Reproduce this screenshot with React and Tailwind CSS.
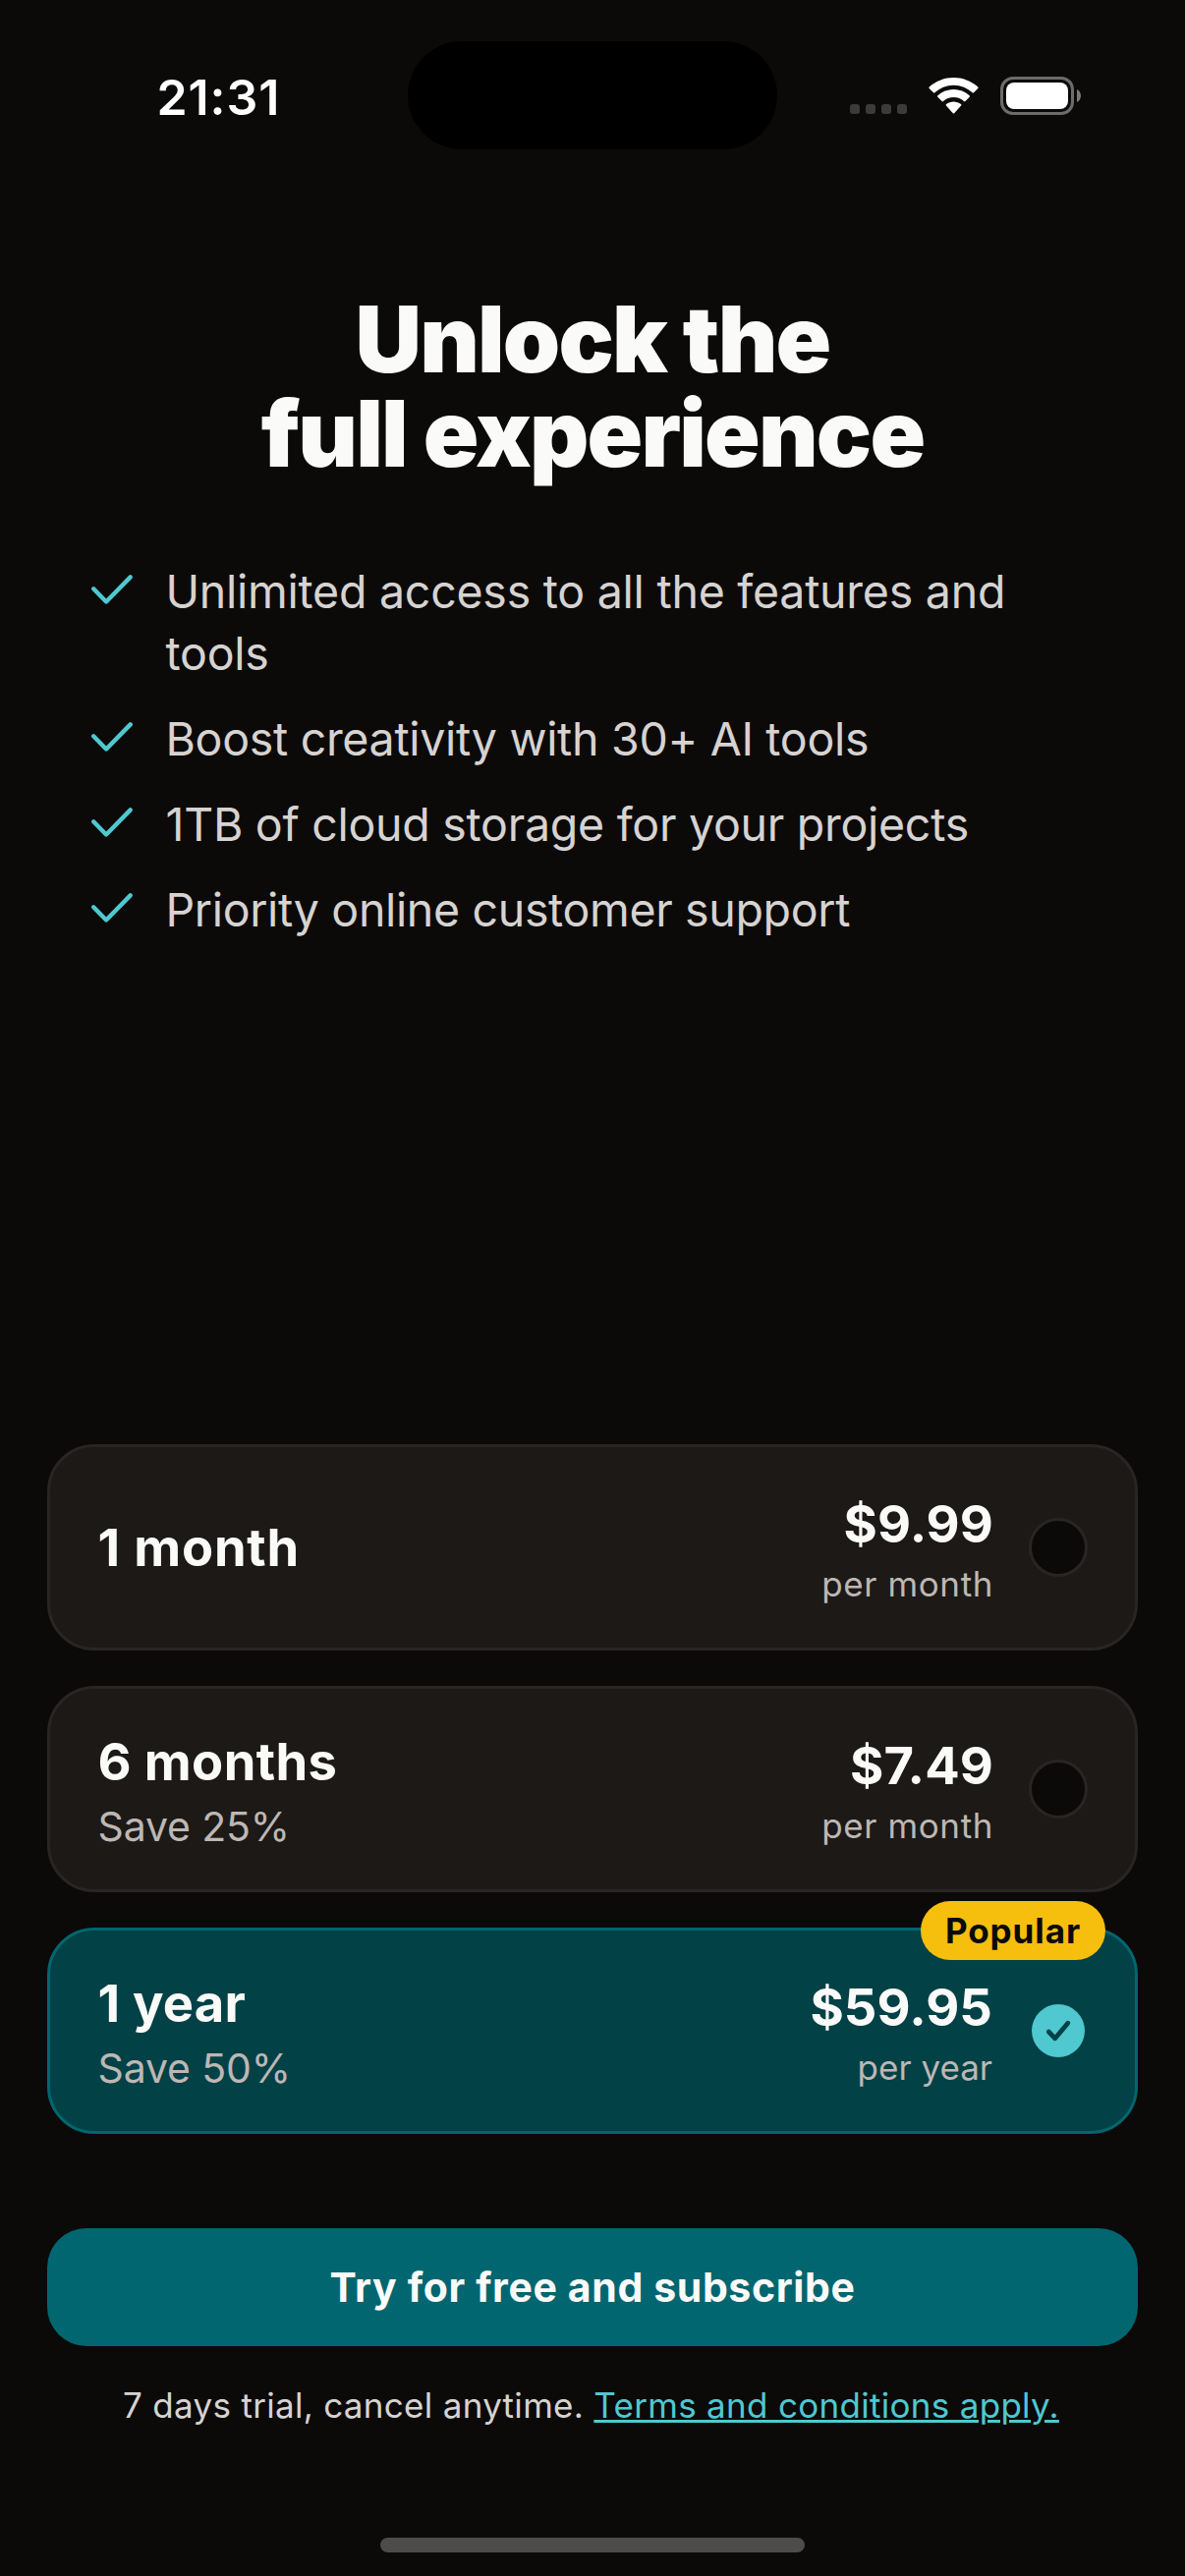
import React from "react";
import clsx from "clsx";

const features = [
  { text: "Unlimited access to all the features and tools", tracking: "tracking-[-0.25px]" },
  { text: "Boost creativity with 30+ AI tools", tracking: "tracking-[-0.31px]" },
  { text: "1TB of cloud storage for your projects", tracking: "tracking-[-0.27px]" },
  { text: "Priority online customer support", tracking: "tracking-[-0.34px]" },
];

const plans = [
  { name: "1 month", tracking: "tracking-[0.8px]", price: "$9.99", period: "per month" },
  { name: "6 months", tracking: "tracking-[0.38px]", save: "Save 25%", price: "$7.49", period: "per month" },
  { name: "1 year", tracking: "tracking-[0.2px]", save: "Save 50%", price: "$59.95", period: "per year", badge: "Popular", selected: true },
];

function WifiIcon() {
  return (
    <svg width="51" height="37" viewBox="0 0 51 37" fill="#fff">
      <path d="M25.5 7.7C32.9 7.7 39.6 10.6 44.6 15.3C45 15.7 45.6 15.7 46 15.3L50.3 11C50.7 10.6 50.7 10 50.3 9.6C36.4 -3.2 14.6 -3.2 0.7 9.6C0.3 10 0.3 10.6 0.7 11L5 15.3C5.4 15.7 6 15.7 6.4 15.3C11.4 10.6 18.1 7.7 25.5 7.7Z" />
      <path d="M25.5 20C29.5 20 33.2 21.5 36 24.1C36.4 24.5 37 24.5 37.4 24.1L41.7 19.8C42.1 19.4 42.1 18.7 41.7 18.3C32.6 9.9 18.4 9.9 9.3 18.3C8.9 18.7 8.9 19.4 9.3 19.8L13.6 24.1C14 24.5 14.6 24.5 15 24.1C17.8 21.5 21.5 20 25.5 20Z" />
      <path d="M33.1 28.5C33.5 28.1 33.5 27.5 33 27.1C28.7 23.5 22.3 23.5 18 27.1C17.5 27.5 17.5 28.1 17.9 28.5L24.8 36.2C25.2 36.6 25.8 36.6 26.2 36.2Z" />
    </svg>
  );
}

function StatusBar() {
  return (
    <header className="mt-[42px] flex h-[110px] shrink-0 items-center">
      <div className="w-[415px] pt-1 pl-[159.5px] text-[50px] leading-none font-semibold tracking-[0.9px] text-white">21:31</div>
      <div className="h-full w-[376px] rounded-full bg-black" />
      <div className="flex h-[39px] items-end pl-[74px]">
        <div className="mb-px flex gap-1.5">
          {[0, 1, 2, 3].map((dot) => (
            <span key={dot} className="size-2.5 rounded-[3px] bg-[#3c3b3a]" />
          ))}
        </div>
        <div className="mb-px ml-[22px]">
          <WifiIcon />
        </div>
        <div className="ml-[22px] h-[39px] w-[75px] rounded-[13px] border-3 border-[#6d6c6b] p-[3px]">
          <div className="h-full rounded-[8px] bg-white" />
        </div>
        <svg className="mb-[13px] ml-[3px]" width="4" height="13" viewBox="0 0 4 13" fill="#7b7a79">
          <path d="M0 0C2.4 1 4 3.6 4 6.5S2.4 12 0 13Z" />
        </svg>
      </div>
    </header>
  );
}

function FeatureItem({ text, tracking }) {
  return (
    <li className="flex items-start">
      <svg
        className="w-[48px] shrink-0"
        height="63"
        viewBox="0 0 48 63"
        fill="none"
        stroke="#4fc8d0"
        strokeWidth="4.4"
        strokeLinecap="round"
        strokeLinejoin="round"
      >
        <path d="M5.2 28.3L18.1 41.5L42.7 16.4" />
      </svg>
      <span className={clsx("pl-[30.5px] text-[46.5px] leading-[63px] text-[#d6d3d1]", tracking)}>{text}</span>
    </li>
  );
}

function PlanCard({ name, tracking, save, price, period, badge, selected }) {
  return (
    <div
      className={clsx(
        "relative flex h-[210px] items-center rounded-[48px] border-3 px-12",
        selected ? "border-[#02666f] bg-[#024146]" : "border-[#292524] bg-[#1c1917]"
      )}
    >
      <div className="flex flex-1 flex-col pl-[0.5px]">
        <span className={clsx("text-[52.5px] leading-[76px] font-bold text-[#fafaf9]", tracking)}>{name}</span>
        {save && <span className="text-[41px] leading-[56px] tracking-[-0.15px] text-[#bdb7b4]">{save}</span>}
      </div>
      <div className="flex flex-col items-end">
        <span className="text-[52.5px] leading-[74px] font-bold tracking-[0.1px] text-[#fafaf9]">{price}</span>
        <span className={clsx("text-[35px] leading-[49px] text-[#bdb7b4]", selected ? "tracking-normal" : "tracking-[0.6px]")}>{period}</span>
      </div>
      {selected ? (
        <div className="ml-10 mr-[3px] flex size-[54px] items-center justify-center rounded-full bg-[#4fc8d0]">
          <svg width="54" height="54" viewBox="0 0 54 54" fill="none" stroke="#024146" strokeWidth="4.8" strokeLinecap="round" strokeLinejoin="round">
            <path d="M17.3 28L23.8 34.8L36.8 19.2" />
          </svg>
        </div>
      ) : (
        <div className="ml-9 size-[60px] rounded-full border-3 border-[#292524] bg-[#0c0a09]" />
      )}
      {badge && (
        <span className="absolute -top-[30px] right-[30px] flex h-[60px] w-[188px] items-center justify-center rounded-full bg-[#f6be0d] text-[35px] font-bold tracking-[0.92px] text-[#0c0a09]">
          {badge}
        </span>
      )}
    </div>
  );
}

export default function App() {
  return (
    <div className="flex h-[2622px] w-[1206px] flex-col overflow-hidden bg-[#0c0a09] font-['Inter',sans-serif]">
      <StatusBar />

      <h1 className="mt-[145px] text-center text-[93.5px] leading-[96px] font-black tracking-[-1.82px] text-[#fafaf9]">
        Unlock the
        <br />
        full experience
      </h1>

      <ul className="mt-[82px] flex flex-col gap-6 pr-[96px] pl-[90px]">
        {features.map((feature) => (
          <FeatureItem key={feature.text} {...feature} />
        ))}
      </ul>

      <section className="mt-auto flex flex-col gap-9 px-12">
        {plans.map((plan) => (
          <PlanCard key={plan.name} {...plan} />
        ))}
      </section>

      <div className="mt-24 flex flex-col px-12">
        <button className="h-[120px] rounded-[40px] bg-[#026670] pt-0.5 text-[41px] font-bold tracking-[0.62px] text-[#fafaf9]">
          Try for free and subscribe
        </button>
        <p className="mt-9 pr-[3px] text-center text-[35px] leading-[48px] tracking-[0.3px] whitespace-nowrap text-[#d6d3d1]">
          7 days trial, cancel anytime.{" "}
          <a className="text-[#4fc8d0] underline decoration-3 underline-offset-[2px]">Terms and conditions apply.</a>
        </p>
      </div>

      <div className="mx-auto mt-[111px] mb-6 h-[15px] w-[432px] shrink-0 rounded-full bg-[#4d4c4c]" />
    </div>
  );
}
